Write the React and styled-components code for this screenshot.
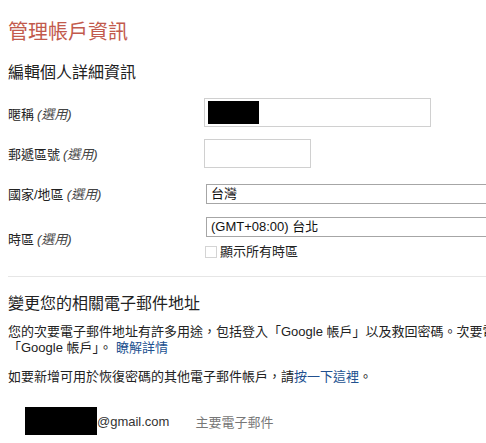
import React from 'react'
import styled, { createGlobalStyle } from 'styled-components'

const GlobalStyle = createGlobalStyle`
html, body {
  margin: 0;
  padding: 0;
  background: #fff;
  overflow: hidden;
}
body {
  font-family: Arial, "Liberation Sans", "Noto Sans CJK TC", sans-serif;
  font-size: 13px;
  color: #222;
}
`

const Page = styled.div`
width: 640px;
padding: 0 8px;
`

const Title = styled.h1`
margin: 20px 0 0;
font-size: 20px;
line-height: 24px;
font-weight: normal;
color: #c25a4c;
`

const SubTitle = styled.h2`
margin: 19px 0 0;
font-size: 16px;
line-height: 20px;
font-weight: normal;
color: #222;
`

const Form = styled.div`
margin-top: 15px;
display: flex;
flex-direction: column;
`

const Row = styled.div`
display: grid;
grid-template-columns: 196px 1fr;
align-items: center;
margin-top: ${p => p.gap || 0}px;
`

const Label = styled.div`
font-size: 13px;
line-height: 16px;
padding-top: ${p => p.shift || 0}px;
color: #222;
`

const Optional = styled.span`
font-style: italic;
color: #444;
margin-left: 3px;
`

const TextBox = styled.div`
box-sizing: border-box;
width: ${p => p.w}px;
height: 29px;
border: 1px solid #d0d0d0;
background: #fff;
padding: 2px 3px;
`

const Redacted = styled.div`
width: ${p => p.w}px;
height: ${p => p.h}px;
background: #000;
`

const Select = styled.div`
box-sizing: border-box;
margin-left: 2px;
width: 320px;
height: 20px;
border: 1px solid #a6a6a6;
padding: 0 4px;
font-size: 13px;
line-height: 18px;
color: #111;
`

const Field = styled.div`
display: flex;
flex-direction: column;
`

const CheckRow = styled.div`
display: flex;
align-items: center;
gap: 3px;
margin-top: 7px;
margin-left: 1px;
font-size: 13px;
line-height: 16px;
color: #222;
`

const CheckBox = styled.span`
box-sizing: border-box;
width: 12px;
height: 12px;
border: 1px solid #d4d4d4;
background: #fff;
`

const Divider = styled.div`
margin-top: 16px;
height: 1px;
background: #e6e6e6;
`

const Section = styled.h2`
margin: 17px 0 0;
font-size: 16px;
line-height: 20px;
font-weight: normal;
color: #222;
`

const Para = styled.p`
margin: ${p => p.top}px 0 0;
font-size: 13px;
line-height: 16px;
white-space: nowrap;
color: #222;
`

const Link = styled.a`
color: #21508f;
text-decoration: none;
margin-left: ${p => p.space || 0}px;
`

const EmailRow = styled.div`
display: flex;
align-items: center;
margin-top: 22px;
padding-left: 17px;
font-size: 13px;
`

const Address = styled.span`
color: #333;
margin-right: 26px;
`

const Tag = styled.span`
color: #777;
`

export default function App() {
  return (
    <Page>
      <GlobalStyle />
      <Title>管理帳戶資訊</Title>
      <SubTitle>編輯個人詳細資訊</SubTitle>
      <Form>
        <Row>
          <Label shift={4}>暱稱<Optional>(選用)</Optional></Label>
          <TextBox w={227}><Redacted w={51} h={23} /></TextBox>
        </Row>
        <Row gap={12}>
          <Label shift={2}>郵遞區號<Optional>(選用)</Optional></Label>
          <TextBox w={107} />
        </Row>
        <Row gap={16}>
          <Label shift={2}>國家/地區<Optional>(選用)</Optional></Label>
          <Select>台灣</Select>
        </Row>
        <Row gap={13}>
          <Label shift={3}>時區<Optional>(選用)</Optional></Label>
          <Field>
            <Select>(GMT+08:00) 台北</Select>
            <CheckRow><CheckBox />顯示所有時區</CheckRow>
          </Field>
        </Row>
      </Form>
      <Divider />
      <Section>變更您的相關電子郵件地址</Section>
      <Para top={10}>
        您的次要電子郵件地址有許多用途，包括登入「Google 帳戶」以及救回密碼。次要電子郵件地址不可以是其他
        <br />
        「Google 帳戶」。<Link space={4} href="#">瞭解詳情</Link>
      </Para>
      <Para top={13}>
        如要新增可用於恢復密碼的其他電子郵件帳戶，請<Link href="#">按一下這裡</Link>。
      </Para>
      <EmailRow>
        <Redacted w={72} h={28} />
        <Address>@gmail.com</Address>
        <Tag>主要電子郵件</Tag>
      </EmailRow>
    </Page>
  )
}
